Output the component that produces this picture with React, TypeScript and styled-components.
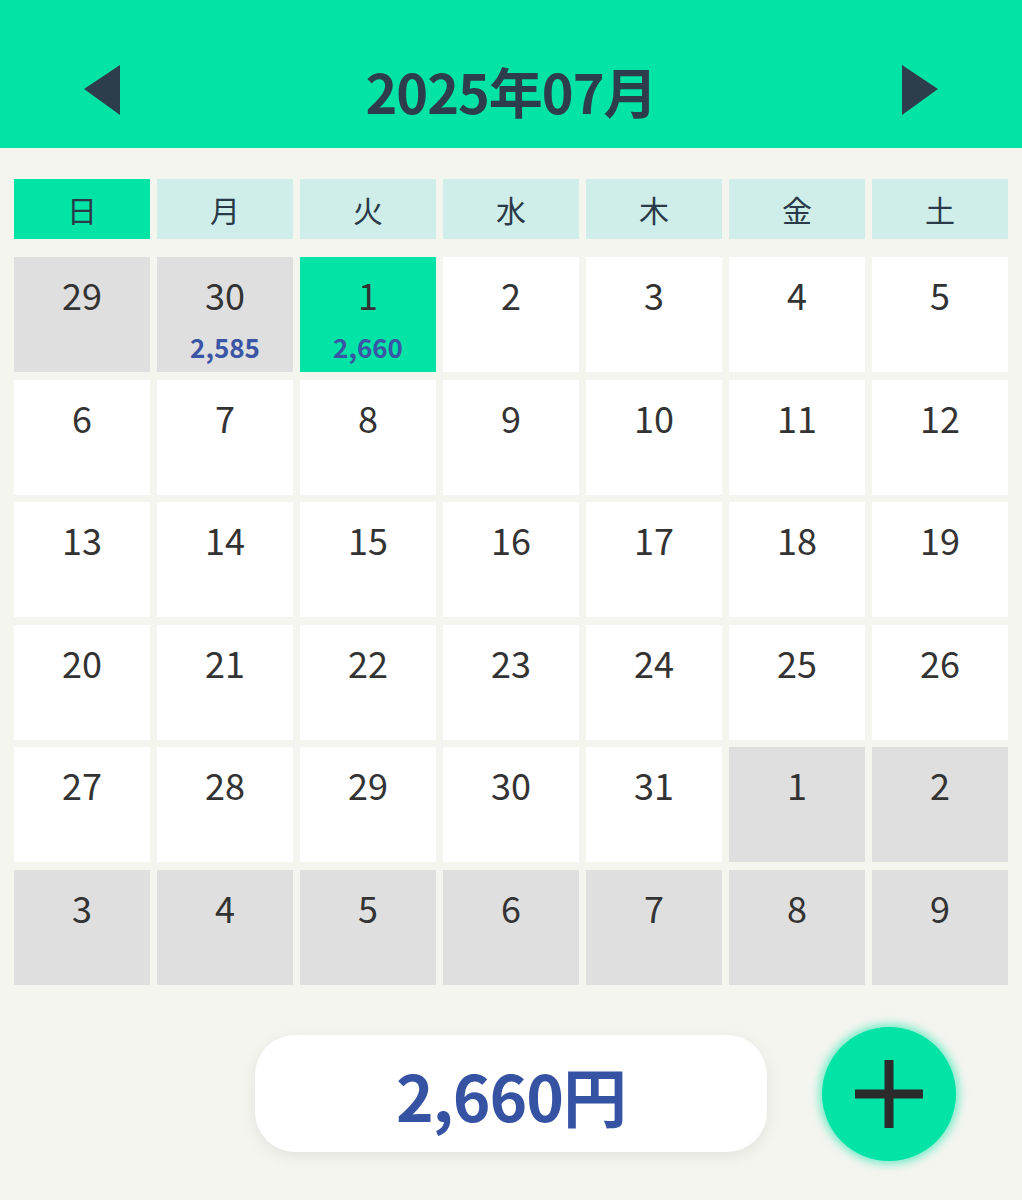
import React from 'react';
import styled, { createGlobalStyle } from 'styled-components';

const GlobalStyle = createGlobalStyle`
  body {
    margin: 0;
    background: #f5f5f0;
    font-family: "Noto Sans CJK JP", "Noto Sans", sans-serif;
  }
`;

const Page = styled.div`
  width: 1022px;
  min-height: 1200px;
  background: #f5f5f0;
`;

const Header = styled.header`
  height: 148px;
  background: #02e3a6;
  display: flex;
  align-items: center;
  justify-content: space-between;
  padding: 32px 83px 0;
  box-sizing: border-box;
`;

const Title = styled.h1`
  margin: 0;
  font-size: 54px;
  font-weight: 700;
  color: #2e3d4c;
  letter-spacing: -1px;
`;

const Arrow = styled.button`
  border: 0;
  background: none;
  padding: 0;
  width: 38px;
  height: 52px;
  display: flex;
  cursor: pointer;
`;

const Grid = styled.div`
  display: grid;
  grid-template-columns: repeat(7, 136px);
  column-gap: 7px;
  padding: 31px 14px 0;
`;

const WeekCell = styled.div<{ isSunday?: boolean }>`
  height: 60px;
  background: ${(props) => (props.isSunday ? '#02e3a6' : '#cfeeea')};
  color: #2a3a48;
  font-size: 30px;
  display: flex;
  align-items: center;
  justify-content: center;
  margin-bottom: 18px;
`;

const DayCell = styled.div<{ tone: 'normal' | 'muted' | 'selected' }>`
  height: 115px;
  margin-bottom: 7.6px;
  background: ${(props) => {
    if (props.tone === 'selected') return '#02e3a6';
    if (props.tone === 'muted') return '#dfdfdf';
    return '#ffffff';
  }};
  display: flex;
  flex-direction: column;
  align-items: center;
  color: #333;
`;

const DayNum = styled.span`
  font-size: 36px;
  line-height: 1;
  margin-top: 19px;
`;

const Amount = styled.span`
  font-size: 26px;
  font-weight: 700;
  color: #3a55a5;
  margin-top: 22px;
  line-height: 1;
`;

const Footer = styled.div`
  display: flex;
  align-items: center;
  padding: 34px 0 0 255px;
  gap: 55px;
`;

const Total = styled.div`
  width: 512px;
  height: 117px;
  background: #fff;
  border-radius: 40px;
  box-shadow: 0 4px 16px rgba(0, 0, 0, 0.08);
  display: flex;
  align-items: center;
  justify-content: center;
  font-size: 64px;
  font-weight: 700;
  color: #3652a3;
  letter-spacing: -1px;
`;

const AddButton = styled.button`
  width: 134px;
  height: 134px;
  border-radius: 50%;
  border: 0;
  background: #02e3a6;
  box-shadow: 0 0 10px 3px rgba(2, 227, 166, 0.55);
  display: flex;
  align-items: center;
  justify-content: center;
  cursor: pointer;
`;

type Day = { n: number; tone: 'normal' | 'muted' | 'selected'; amount?: string };

const weekdays = ['日', '月', '火', '水', '木', '金', '土'];

const buildDays = (): Day[] => {
  const days: Day[] = [
    { n: 29, tone: 'muted' },
    { n: 30, tone: 'muted', amount: '2,585' },
  ];
  for (let i = 1; i <= 31; i += 1) {
    days.push(i === 1 ? { n: i, tone: 'selected', amount: '2,660' } : { n: i, tone: 'normal' });
  }
  for (let i = 1; i <= 9; i += 1) days.push({ n: i, tone: 'muted' });
  return days;
};

const App = () => {
  const days = buildDays();
  return (
    <Page>
      <GlobalStyle />
      <Header>
        <Arrow aria-label="前の月">
          <svg width="38" height="52" viewBox="0 0 38 52">
            <path d="M37 1 L1 25 L37 51 Z" fill="#2e3d4c" />
          </svg>
        </Arrow>
        <Title>2025年07月</Title>
        <Arrow aria-label="次の月">
          <svg width="38" height="52" viewBox="0 0 38 52">
            <path d="M1 1 L37 25 L1 51 Z" fill="#2e3d4c" />
          </svg>
        </Arrow>
      </Header>
      <Grid>
        {weekdays.map((w, i) => (
          <WeekCell key={w} isSunday={i === 0}>{w}</WeekCell>
        ))}
        {days.map((d, i) => (
          <DayCell key={i} tone={d.tone}>
            <DayNum>{d.n}</DayNum>
            {d.amount && <Amount>{d.amount}</Amount>}
          </DayCell>
        ))}
      </Grid>
      <Footer>
        <Total>2,660円</Total>
        <AddButton aria-label="追加">
          <svg width="68" height="68" viewBox="0 0 68 68">
            <path d="M34 0 V68 M0 34 H68" stroke="#2b2b2b" strokeWidth="9" />
          </svg>
        </AddButton>
      </Footer>
    </Page>
  );
};

export default App;
